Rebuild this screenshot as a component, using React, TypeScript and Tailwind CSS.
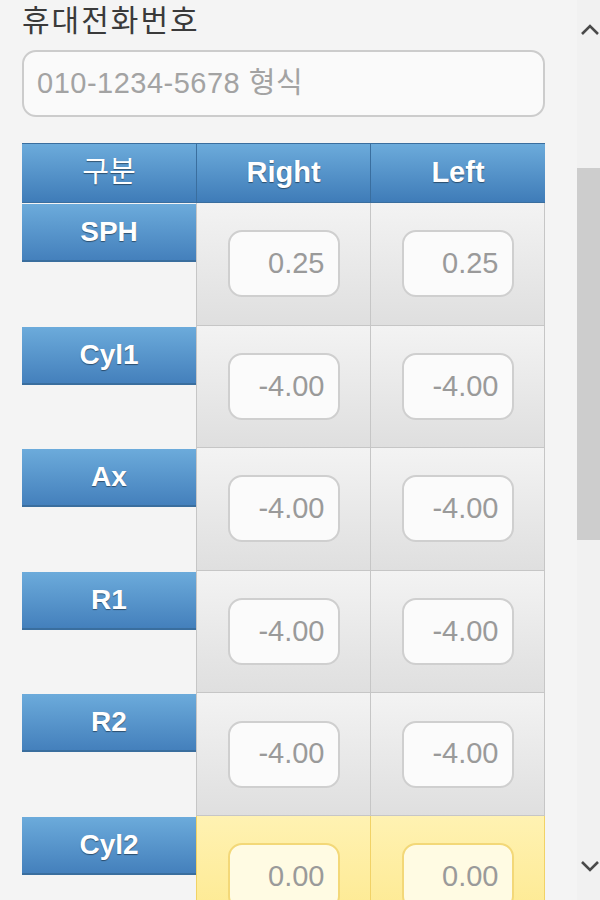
import React from "react";

const rows = [
  { label: "SPH", r: "0.25", l: "0.25", y: false },
  { label: "Cyl1", r: "-4.00", l: "-4.00", y: false },
  { label: "Ax", r: "-4.00", l: "-4.00", y: false },
  { label: "R1", r: "-4.00", l: "-4.00", y: false },
  { label: "R2", r: "-4.00", l: "-4.00", y: false },
  { label: "Cyl2", r: "0.00", l: "0.00", y: true },
];

const font = { fontFamily: '"Liberation Sans", "Noto Sans CJK KR", Arial, sans-serif' };

function ValueCell({ v, yellow, last }: { v: string; yellow: boolean; last?: boolean }) {
  return (
    <div
      className={
        "flex items-center justify-center border-b border-l " +
        (last ? "border-r " : "") +
        (yellow
          ? "bg-gradient-to-b from-[#fff2b2] to-[#fde88a] border-[#f1d266]"
          : "bg-gradient-to-b from-[#f3f3f3] to-[#dfdfdf] border-[#c6c6c6]")
      }
    >
      <div
        className={
          "w-[112px] h-[67px] rounded-[14px] border-2 flex items-center justify-end pr-[13px] text-[29px] text-[#9a9a9a] " +
          (yellow ? "bg-[#fffbe3] border-[#f3d878]" : "bg-[#fbfbfb] border-[#cfcfcf]")
        }
      >
        {v}
      </div>
    </div>
  );
}

const headCls =
  "h-[60px] bg-gradient-to-b from-[#6cabdb] to-[#3f7cb8] border-t border-b border-[#3a6e9e] flex items-center justify-center text-white [text-shadow:0_1px_1px_rgba(0,0,0,0.45)]";

export default function App() {
  return (
    <div className="w-[600px] h-[900px] overflow-hidden flex bg-[#f4f4f4]" style={font}>
      <div className="flex-1 pl-[22px] pr-[32px]">
        <div className="text-[30px] leading-none tracking-[2px] text-[#3a3a3a] pt-[6px] h-[50px]">휴대전화번호</div>
        <div className="h-[67px] rounded-[14px] border-2 border-[#cccccc] bg-[#fafafa] flex items-center pl-[13px] text-[29px] tracking-[0.5px] text-[#a3a3a3]">
          010-1234-5678 형식
        </div>
        <div className="mt-[26px] w-[523px] grid grid-cols-[174px_174px_175px]">
          <div className={headCls + " text-[29px]"}>구분</div>
          <div className={headCls + " border-l font-bold text-[29px]"}>Right</div>
          <div className={headCls + " border-l font-bold text-[29px]"}>Left</div>
          {rows.map((r) => (
            <React.Fragment key={r.label}>
              <div className="h-[122.6px] pt-[1px]">
                <div className="h-[58px] bg-gradient-to-b from-[#6cabdb] to-[#4480bc] border-b-2 border-[#3a6e9e] flex items-center justify-center text-white font-bold text-[28px] [text-shadow:0_1px_1px_rgba(0,0,0,0.45)]">
                  {r.label}
                </div>
              </div>
              <ValueCell v={r.r} yellow={r.y} />
              <ValueCell v={r.l} yellow={r.y} last />
            </React.Fragment>
          ))}
        </div>
      </div>
      <div className="w-[23px] h-full bg-[#f1f1f1] relative">
        <svg className="absolute top-[22px] left-[3px]" width="22" height="16" viewBox="0 0 22 16">
          <path d="M2 12 L10 4 L18 12" fill="none" stroke="#4a4a4a" strokeWidth="2.6" />
        </svg>
        <div className="absolute top-[168px] left-0 w-[23px] h-[372px] bg-[#cdcdcd]" />
        <svg className="absolute top-[858px] left-[3px]" width="22" height="16" viewBox="0 0 22 16">
          <path d="M2 4 L10 12 L18 4" fill="none" stroke="#4a4a4a" strokeWidth="2.6" />
        </svg>
      </div>
    </div>
  );
}
